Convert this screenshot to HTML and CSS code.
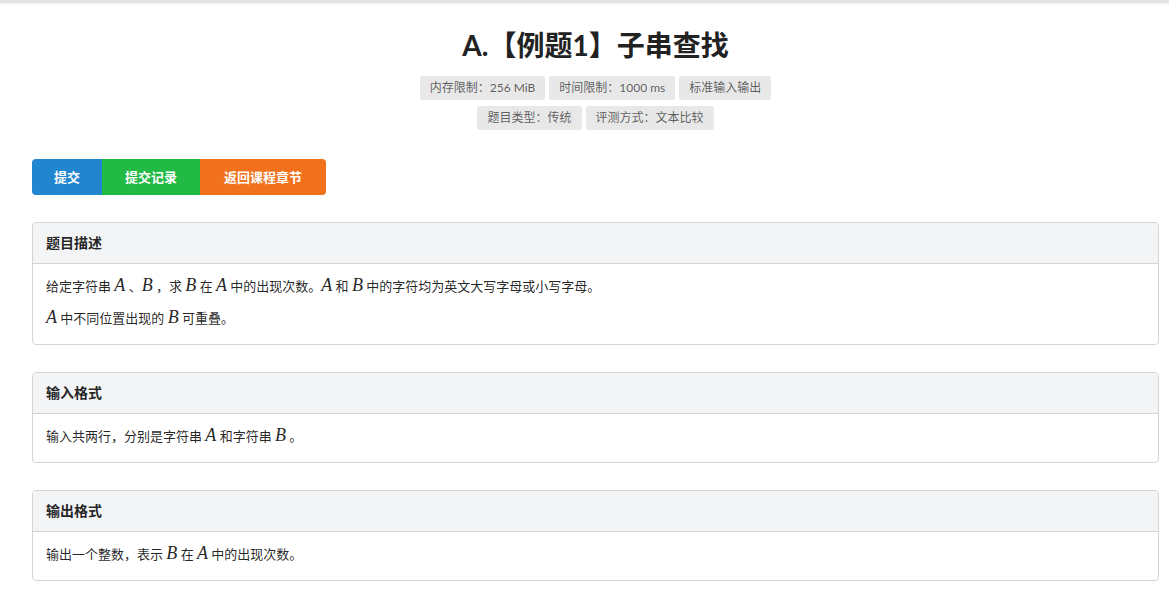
FILE: index.html
```html
<!DOCTYPE html>
<html lang="zh-CN">
  <head>
    <meta charset="UTF-8" />
    <title>A.【例题1】子串查找</title>
    <link rel="stylesheet" href="styles.css">
  </head>
  <body>
    <div class="topbar"></div>
    <div class="page">
      <div class="head">
        <h1 class="title">A.【例题1】子串查找</h1>
        <div class="labels">
          <span class="label">内存限制：256 MiB</span>
          <span class="label">时间限制：1000 ms</span>
          <span class="label">标准输入输出</span>
        </div>
        <div class="labels">
          <span class="label">题目类型：传统</span>
          <span class="label">评测方式：文本比较</span>
        </div>
      </div>

      <div class="actions">
        <a class="btn btn-blue">提交</a>
        <a class="btn btn-green">提交记录</a>
        <a class="btn btn-orange">返回课程章节</a>
      </div>

      <div class="card">
        <div class="card-head">题目描述</div>
        <div class="card-body">
          <p>给定字符串 <i class="m">A</i> 、<i class="m">B</i> ，求 <i class="m">B</i> 在 <i class="m">A</i> 中的出现次数。<i class="m">A</i> 和 <i class="m">B</i> 中的字符均为英文大写字母或小写字母。</p>
          <p><i class="m">A</i> 中不同位置出现的 <i class="m">B</i> 可重叠。</p>
        </div>
      </div>

      <div class="card">
        <div class="card-head">输入格式</div>
        <div class="card-body">
          <p>输入共两行，分别是字符串 <i class="m">A</i> 和字符串 <i class="m">B</i> 。</p>
        </div>
      </div>

      <div class="card">
        <div class="card-head">输出格式</div>
        <div class="card-body">
          <p>输出一个整数，表示 <i class="m">B</i> 在 <i class="m">A</i> 中的出现次数。</p>
        </div>
      </div>
    </div>
  </body>
</html>
```

FILE: styles.css
```css
* {
  margin: 0;
  padding: 0;
  box-sizing: border-box;
}

body {
  font-family: Lato, "Noto Sans CJK SC", sans-serif;
  background: #fff;
  color: rgba(0, 0, 0, 0.87);
  font-size: 13px;
}

.topbar {
  height: 3px;
  background: #e4e4e4;
  box-shadow: 0 1px 2px rgba(0, 0, 0, 0.08);
}

.page {
  padding: 0 10px 0 32px;
}

.head {
  text-align: center;
  padding-top: 25px;
}

.title {
  font-size: 28px;
  font-weight: 700;
  line-height: 34px;
  color: #222;
  margin-bottom: 14px;
}

.labels {
  display: flex;
  justify-content: center;
  gap: 4px;
  margin-bottom: 6px;
}

.label {
  background: #e8e8e8;
  color: rgba(0, 0, 0, 0.62);
  font-size: 12px;
  font-weight: 400;
  line-height: 14px;
  padding: 5px 10px;
  border-radius: 3px;
}

.actions {
  display: flex;
  margin-top: 29px;
  margin-bottom: 27px;
}

.btn {
  display: block;
  color: #fff;
  font-size: 13px;
  font-weight: 700;
  line-height: 36px;
  height: 36px;
  text-align: center;
}

.btn-blue {
  background: #2185d0;
  width: 70px;
  border-radius: 4px 0 0 4px;
}

.btn-green {
  background: #21ba45;
  width: 98px;
}

.btn-orange {
  background: #f2711c;
  width: 126px;
  border-radius: 0 4px 4px 0;
}

.card {
  border: 1px solid #d4d4d5;
  border-radius: 4px;
  margin-bottom: 27px;
  overflow: hidden;
}

.card-head {
  background: #f3f4f5;
  border-bottom: 1px solid #d4d4d5;
  font-size: 14px;
  font-weight: 700;
  height: 41px;
  line-height: 40px;
  padding: 0 13px;
}

.card-body {
  padding: 12px 13px 4px;
}

.card-body p {
  line-height: 20px;
  margin-bottom: 12px;
}

.m {
  font-family: "Liberation Serif", "DejaVu Serif", serif;
  font-style: italic;
  font-size: 18px;
  line-height: 1;
}
```
